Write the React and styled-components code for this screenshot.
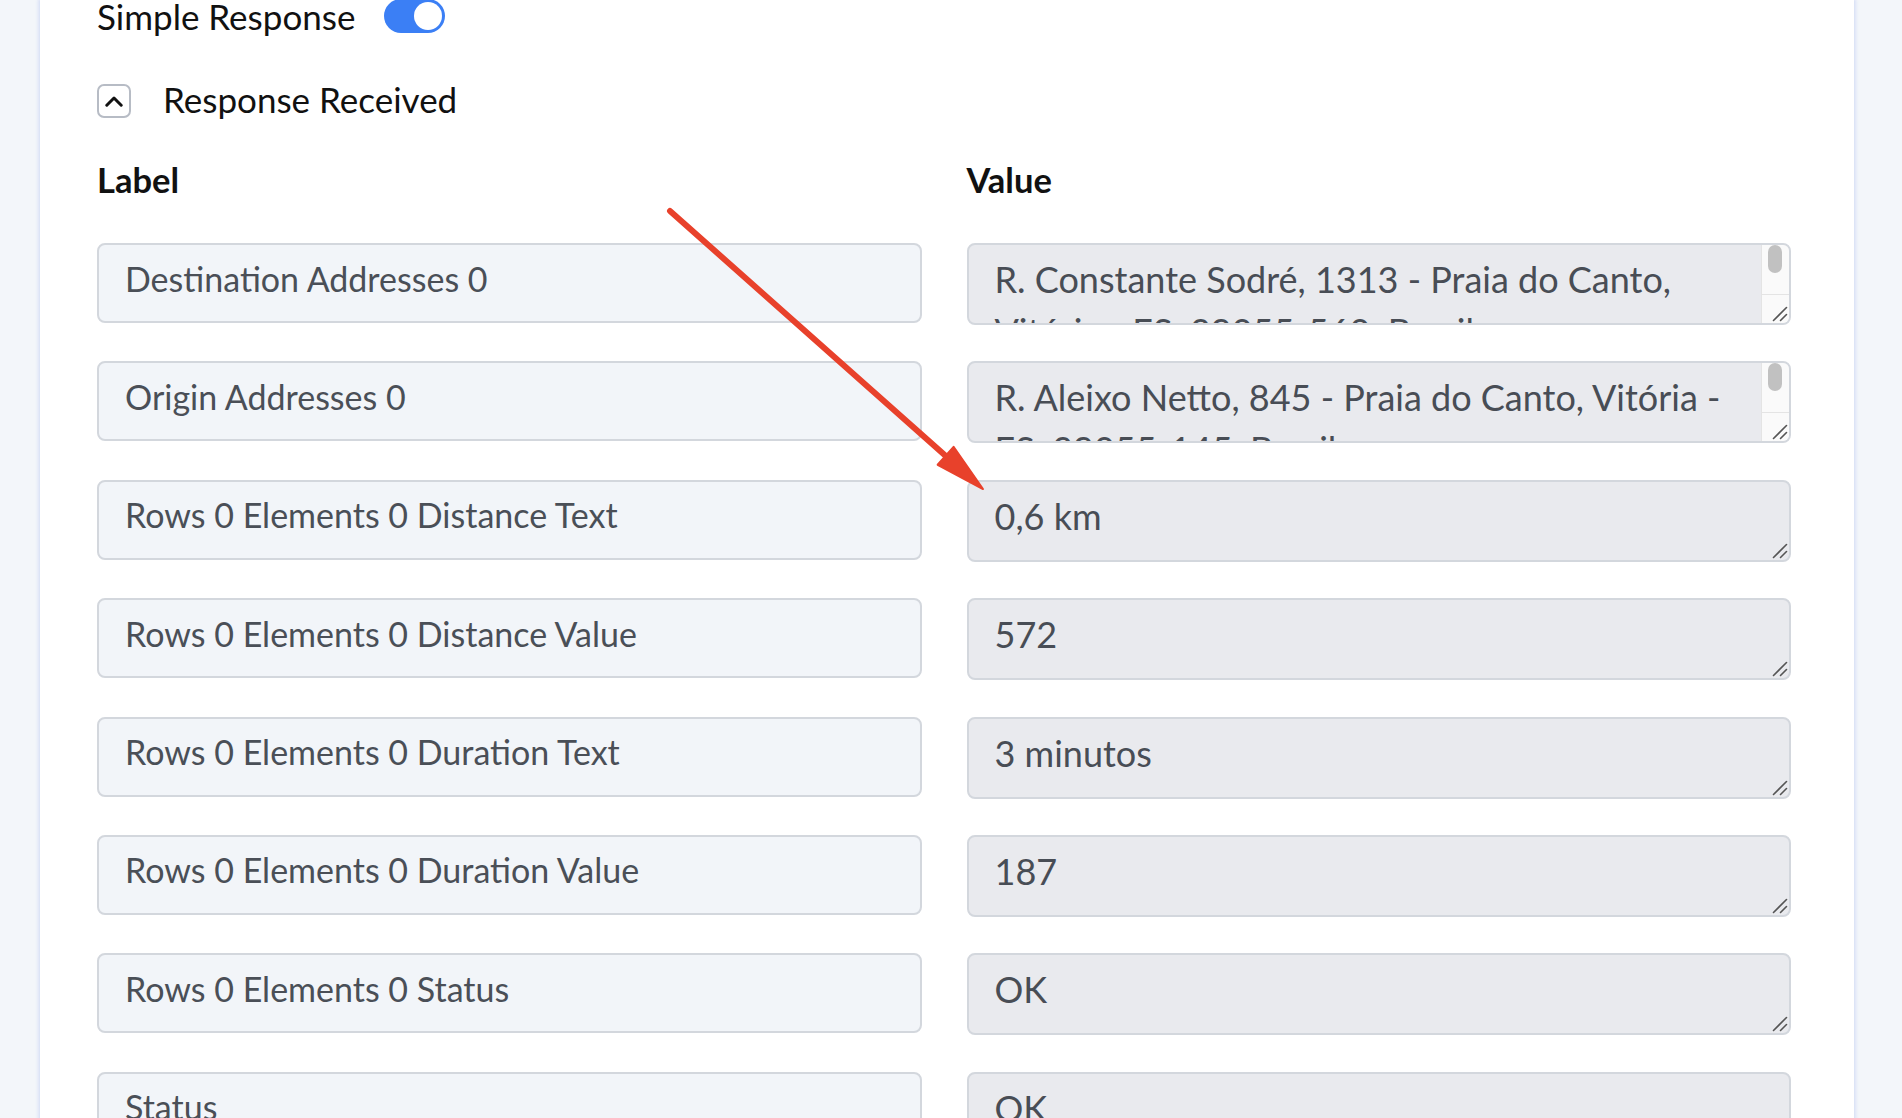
import React from 'react';
import styled, { createGlobalStyle } from 'styled-components';

const GlobalStyle = createGlobalStyle`
  html, body { margin: 0; padding: 0; background: #f3f6fa; }
  body { font-family: Lato, "Noto Sans", "Liberation Sans", sans-serif; overflow: hidden; }
  * { box-sizing: border-box; }
`;

const Page = styled.div`
  position: relative;
  min-height: 1118px;
  padding: 0 48px 0 40px;
`;

const Card = styled.section`
  background: #fff;
  min-height: 1300px;
  padding: 0 63px 0 57px;
  box-shadow: -2px 0 3px rgba(96, 125, 230, 0.16), 2px 0 3px rgba(96, 125, 230, 0.16);
`;

const ToggleRow = styled.div`
  display: flex;
  align-items: center;
  gap: 29px;
  height: 34px;
  margin-top: -1px;
`;

const Title = styled.span`
  font-size: ${p => (p.$bold ? '34.5px' : '35px')};
  line-height: 40px;
  color: #111;
  font-weight: ${p => (p.$bold ? 700 : 400)};
`;

const SectionTitle = styled(Title)`
  margin-bottom: 4px;
`;

const Switch = styled.button`
  width: 61px;
  height: 34px;
  border: none;
  border-radius: 17px;
  padding: 3px;
  background: ${p => (p.$on ? '#3b7ff5' : '#cfd4dc')};
  display: flex;
  justify-content: ${p => (p.$on ? 'flex-end' : 'flex-start')};
  cursor: pointer;
`;

const Knob = styled.span`
  width: 28px;
  height: 28px;
  border-radius: 50%;
  background: #fff;
`;

const SectionHeader = styled.div`
  display: flex;
  align-items: center;
  gap: 32px;
  margin-top: 51px;
  height: 34px;
`;

const CollapseButton = styled.button`
  width: 34px;
  height: 34px;
  padding: 0;
  border: 2px solid #b7bcc5;
  border-radius: 7px;
  background: #fff;
  display: grid;
  place-items: center;
  cursor: pointer;
`;

const ColumnHeads = styled.div`
  display: grid;
  grid-template-columns: 1fr 1fr;
  column-gap: 45px;
  margin-top: 42px;
`;

const FieldGrid = styled.div`
  display: grid;
  grid-template-columns: 1fr 1fr;
  column-gap: 45px;
  row-gap: 36.4px;
  align-items: start;
  margin-top: 43px;
`;

const LabelInput = styled.input`
  display: block;
  width: 100%;
  height: 80px;
  margin: 0;
  border: 2px solid #d3d7dd;
  border-radius: 8px;
  background: #f2f5f9;
  padding: 5px 26px 15px;
  font-family: inherit;
  font-size: 34px;
  color: #4a4f57;
  outline: none;
`;

const ValueWrap = styled.div`
  position: relative;
`;

const ValueArea = styled.textarea`
  display: block;
  width: 100%;
  height: 82px;
  margin: 0;
  border: 2px solid #d3d7dd;
  border-radius: 8px;
  background: #e9eaee;
  padding: 8px ${p => (p.$scroll ? '54px' : '26px')} 7px 26px;
  font-family: inherit;
  font-size: 36px;
  line-height: 52px;
  color: #484d55;
  resize: none;
  outline: none;
  overflow: hidden;
`;

/* scrollbar drawn over the right edge of a textarea whose text overflows */
const ScrollGutter = styled.div`
  position: absolute;
  top: 2px;
  right: 2px;
  bottom: 2px;
  width: 28px;
  display: flex;
  flex-direction: column;
  pointer-events: none;
`;

const ScrollTrack = styled.div`
  flex: 1;
  background: #fafafa;
  border-left: 1px solid #e4e4e4;
  border-top-right-radius: 6px;
  padding: 0 7px 0 6px;
`;

const ScrollThumb = styled.div`
  height: 28px;
  border-radius: 8px;
  background: #c1c1c1;
`;

const ScrollCorner = styled.div`
  height: 29px;
  background: #fafafa;
  border-top: 1px solid #e4e4e4;
  border-left: 1px solid #e4e4e4;
  border-bottom-right-radius: 6px;
`;

const Grip = styled.svg`
  position: absolute;
  right: 3px;
  bottom: 3px;
  width: 16px;
  height: 16px;
  pointer-events: none;
`;

const ArrowLayer = styled.svg`
  position: absolute;
  left: 0;
  top: 0;
  width: 1902px;
  height: 1118px;
  pointer-events: none;
`;

const fields = [
  ['Destination Addresses 0', 'R. Constante Sodré, 1313 - Praia do Canto, Vitória - ES, 29055-560, Brasil'],
  ['Origin Addresses 0', 'R. Aleixo Netto, 845 - Praia do Canto, Vitória - ES, 29055-145, Brasil'],
  ['Rows 0 Elements 0 Distance Text', '0,6 km'],
  ['Rows 0 Elements 0 Distance Value', '572'],
  ['Rows 0 Elements 0 Duration Text', '3 minutos'],
  ['Rows 0 Elements 0 Duration Value', '187'],
  ['Rows 0 Elements 0 Status', 'OK'],
  ['Status', 'OK'],
];

function ResizeGrip() {
  return (
    <Grip viewBox="0 0 16 16">
      <line x1="1.5" y1="14.5" x2="14.5" y2="1.5" stroke="#555" strokeWidth="1.6" strokeLinecap="round" />
      <line x1="8.5" y1="14.5" x2="14.5" y2="8.5" stroke="#555" strokeWidth="1.6" strokeLinecap="round" />
    </Grip>
  );
}

function ValueField({ value }) {
  const long = value.length > 40;
  return (
    <ValueWrap>
      <ValueArea readOnly value={value} $scroll={long} />
      {long && (
        <ScrollGutter>
          <ScrollTrack>
            <ScrollThumb />
          </ScrollTrack>
          <ScrollCorner />
        </ScrollGutter>
      )}
      <ResizeGrip />
    </ValueWrap>
  );
}

export default function App() {
  const tip = [983, 490];
  const start = [670, 212];
  const dx = tip[0] - start[0];
  const dy = tip[1] - start[1];
  const len = Math.hypot(dx, dy);
  const ux = dx / len;
  const uy = dy / len;
  const headLen = 50;
  const half = 12;
  const bx = tip[0] - ux * headLen;
  const by = tip[1] - uy * headLen;
  const head = `${tip[0]},${tip[1]} ${bx - uy * half},${by + ux * half} ${bx + uy * half},${by - ux * half}`;

  return (
    <>
      <GlobalStyle />
      <Page>
        <Card>
          <ToggleRow>
            <Title>Simple Response</Title>
            <Switch $on aria-label="Simple Response">
              <Knob />
            </Switch>
          </ToggleRow>

          <SectionHeader>
            <CollapseButton aria-label="Collapse">
              <svg width="18" height="18" viewBox="0 0 18 18">
                <polyline points="1.8,13.2 9,6 16.2,13.2" fill="none" stroke="#111" strokeWidth="3" strokeLinecap="round" strokeLinejoin="round" />
              </svg>
            </CollapseButton>
            <SectionTitle>Response Received</SectionTitle>
          </SectionHeader>

          <ColumnHeads>
            <Title $bold>Label</Title>
            <Title $bold>Value</Title>
          </ColumnHeads>

          <FieldGrid>
            {fields.map(([label, value]) => (
              <React.Fragment key={label}>
                <LabelInput readOnly value={label} />
                <ValueField value={value} />
              </React.Fragment>
            ))}
          </FieldGrid>
        </Card>

        <ArrowLayer viewBox="0 0 1902 1118">
          <line x1={start[0]} y1={start[1]} x2={bx + ux * 4} y2={by + uy * 4} stroke="#e8412b" strokeWidth="6" strokeLinecap="round" />
          <polygon points={head} fill="#e8412b" stroke="#e8412b" strokeWidth="2" strokeLinejoin="round" />
        </ArrowLayer>
      </Page>
    </>
  );
}
